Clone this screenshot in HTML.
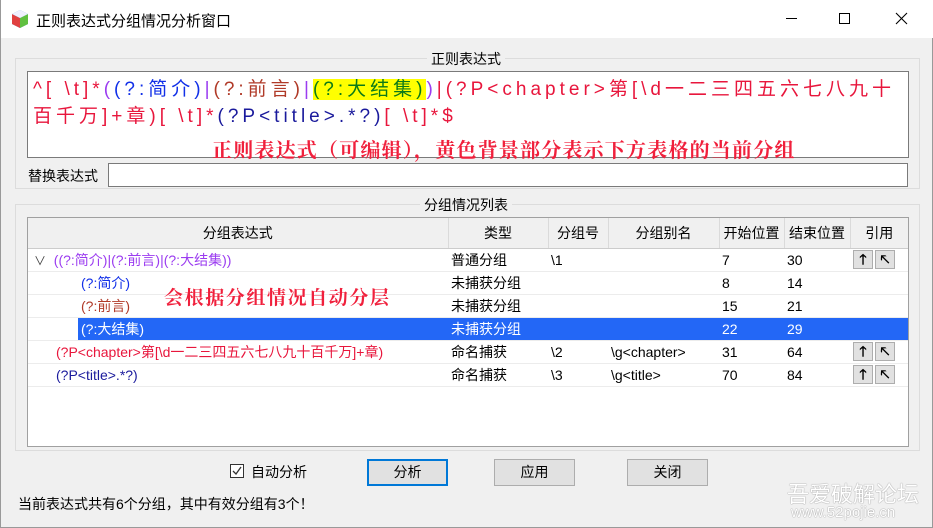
<!DOCTYPE html>
<html><head><meta charset="utf-8"><style>
*{margin:0;padding:0;box-sizing:border-box}
body{width:933px;height:528px;background:#f0f0f0;font-family:"Liberation Sans","Noto Sans CJK SC",sans-serif;font-size:14px;color:#000;position:relative;overflow:hidden;border-left:1px solid #999;border-right:1px solid #999;border-bottom:1px solid #999}
.a{position:absolute;white-space:nowrap}
.title{left:0;top:0;width:933px;height:38px;background:#fff}
.gb{border:1px solid #dcdcdc}
.lbl{background:#f0f0f0;padding:0 4px}
.rx{font-size:19px;letter-spacing:4px;line-height:27px}
.r{color:#e8163c}.p{color:#9b3cf0}.b{color:#1230e8}.br{color:#b03a28}.g{color:#0c7a18;background:#ffff00}.db{color:#1a1a9c}
.hint{font-family:"Noto Serif CJK SC",serif;font-weight:bold;color:#f0203c;font-size:20px;letter-spacing:1.2px}
table{border-collapse:collapse;table-layout:fixed}
td{height:23px;border-bottom:1px solid #ececec;padding-left:3px;font-size:14px;white-space:nowrap;overflow:hidden}
th{height:30px;font-weight:normal;border-right:1px solid #dadada;border-bottom:1px solid #ccc;font-size:14px;background:#f0f0f0}
.btnr{display:inline-block;width:20px;height:19px;background:#e1e1e1;border:1px solid #adadad;vertical-align:middle;text-align:center;line-height:17px;font-size:14px;font-weight:bold;margin-right:2px}
.btn{position:absolute;height:27px;width:81px;background:#e1e1e1;border:1px solid #adadad;text-align:center;line-height:25px;font-size:14px}
</style></head><body>
<div class="a title"></div>
<svg class="a" style="left:9px;top:9px" width="20" height="20" viewBox="0 0 20 20"><path d="M10 1 L18 5 L18 15 L10 19 L2 15 L2 5Z" fill="#4aa0e0"/><path d="M2 5 L10 9 L10 19 L2 15Z" fill="#e04040"/><path d="M10 9 L18 5 L18 15 L10 19Z" fill="#60c040"/><path d="M10 1 L18 5 L10 9 L2 5Z" fill="#f0f0ff"/></svg>
<div class="a" style="left:35px;top:10px;font-size:15px">正则表达式分组情况分析窗口</div>
<div class="a" style="left:785px;top:18px;width:11px;height:1px;background:#000"></div>
<div class="a" style="left:838px;top:13px;width:11px;height:11px;border:1px solid #000"></div>
<svg class="a" style="left:894px;top:12px" width="13" height="13"><path d="M1 1L12 12M12 1L1 12" stroke="#000" stroke-width="1.1"/></svg>

<div class="a gb" style="left:14px;top:58px;width:905px;height:131px"></div>
<div class="a lbl" style="left:426px;top:49px">正则表达式</div>
<div class="a" style="left:26px;top:71px;width:882px;height:87px;background:#fff;border:1px solid #7a7a7a"></div>
<div class="a rx" style="left:32px;top:76px"><span class="r">^[ \t]*</span><span class="p">(</span><span class="b">(?:简介)</span><span class="p">|</span><span class="br">(?:前言)</span><span class="p">|</span><span class="g">(?:大结集)</span><span class="p">)</span><span class="r">|(?P&lt;chapter&gt;第[\d一二三四五六七八九十</span></div>
<div class="a rx" style="left:32px;top:103px"><span class="r">百千万]+章)[ \t]*</span><span class="db">(?P&lt;title&gt;.*?)</span><span class="r">[ \t]*$</span></div>
<div class="a hint" style="left:211px;top:134px">正则表达式（可编辑），黄色背景部分表示下方表格的当前分组</div>
<div class="a" style="left:27px;top:166px">替换表达式</div>
<div class="a" style="left:107px;top:163px;width:800px;height:24px;background:#fff;border:1px solid #7a7a7a"></div>

<div class="a gb" style="left:14px;top:204px;width:905px;height:247px"></div>
<div class="a lbl" style="left:419px;top:195px">分组情况列表</div>
<div class="a" style="left:26px;top:217px;width:882px;height:230px;background:#fff;border:1px solid #a0a0a0">
<table style="width:880px">
<colgroup><col style="width:420px"><col style="width:100px"><col style="width:60px"><col style="width:111px"><col style="width:65px"><col style="width:66px"><col style="width:58px"></colgroup>
<tr><th>分组表达式</th><th>类型</th><th>分组号</th><th>分组别名</th><th>开始位置</th><th>结束位置</th><th style="border-right:none">引用</th></tr>
<tr><td style="padding-left:6px"><span style="font-size:12px;color:#444">&#x2228;</span>&nbsp;&nbsp;<span class="p">((?:简介)|(?:前言)|(?:大结集))</span></td><td>普通分组</td><td>\1</td><td></td><td>7</td><td>30</td><td><span class="btnr">🡑</span><span class="btnr">🡔</span></td></tr>
<tr><td style="padding-left:53px"><span class="b">(?:简介)</span></td><td>未捕获分组</td><td></td><td></td><td>8</td><td>14</td><td></td></tr>
<tr><td style="padding-left:53px"><span class="br">(?:前言)</span></td><td>未捕获分组</td><td></td><td></td><td>15</td><td>21</td><td></td></tr>
<tr style="color:#fff"><td style="padding:0 0 0 50px;background:linear-gradient(90deg,#fff 50px,#2367f6 50px)"><span style="padding-left:3px">(?:大结集)</span></td><td style="background:#2367f6">未捕获分组</td><td style="background:#2367f6"></td><td style="background:#2367f6"></td><td style="background:#2367f6">22</td><td style="background:#2367f6">29</td><td style="background:#2367f6"></td></tr>
<tr><td style="padding-left:28px"><span class="r">(?P&lt;chapter&gt;第[\d一二三四五六七八九十百千万]+章)</span></td><td>命名捕获</td><td>\2</td><td>\g&lt;chapter&gt;</td><td>31</td><td>64</td><td><span class="btnr">🡑</span><span class="btnr">🡔</span></td></tr>
<tr><td style="padding-left:28px"><span class="db">(?P&lt;title&gt;.*?)</span></td><td>命名捕获</td><td>\3</td><td>\g&lt;title&gt;</td><td>70</td><td>84</td><td><span class="btnr">🡑</span><span class="btnr">🡔</span></td></tr>
</table></div>
<div class="a hint" style="left:163px;top:283px;font-size:19px;letter-spacing:1.6px;text-shadow:0 0 2px #fff">会根据分组情况自动分层</div>

<div class="a" style="left:229px;top:464px;width:14px;height:14px;border:1px solid #333;background:#fff"></div>
<svg class="a" style="left:230px;top:465px" width="12" height="12"><path d="M2 6L5 9L10 2" stroke="#333" stroke-width="1.3" fill="none"/></svg>
<div class="a" style="left:250px;top:462px">自动分析</div>
<div class="btn" style="left:366px;top:459px;border:2px solid #0078d7;line-height:23px">分析</div>
<div class="btn" style="left:493px;top:459px">应用</div>
<div class="btn" style="left:626px;top:459px">关闭</div>
<div class="a" style="left:17px;top:494px">当前表达式共有6个分组，其中有效分组有3个！</div>
<div class="a" style="left:786px;top:477px;font-size:22px;color:#fff;text-shadow:0 0 1px #999,0 0 1px #999">吾爱破解论坛</div>
<div class="a" style="left:790px;top:504px;font-size:15px;color:#fff;text-shadow:0 0 1px #999,0 0 1px #999">www.52pojie.cn</div>
</body></html>
